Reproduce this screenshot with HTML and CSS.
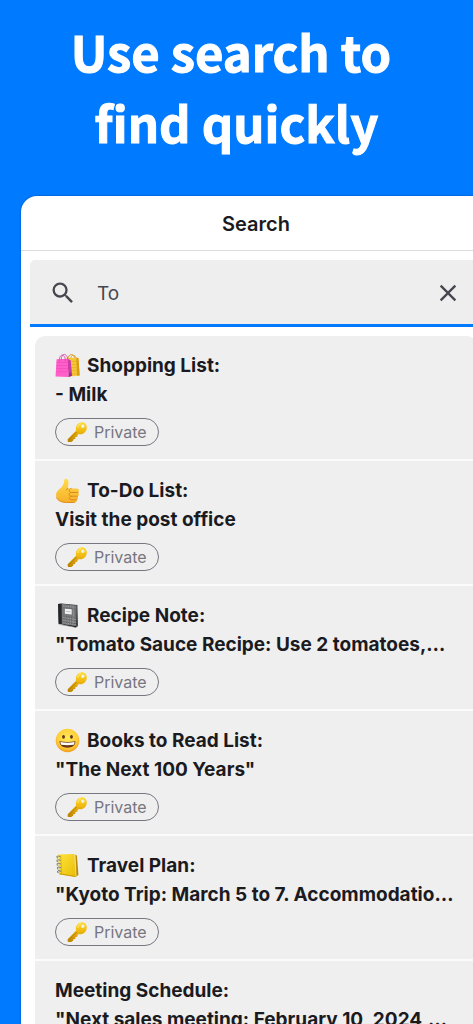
FILE: index.html
```html
<!DOCTYPE html>
<html lang="en">
<head>
<meta charset="utf-8">
<meta name="viewport" content="width=device-width, initial-scale=1">
<title>Search</title>
<link rel="stylesheet" href="styles.css">
</head>
<body>
<svg class="defs" aria-hidden="true">
  <defs>
    <linearGradient id="gold" x1="0" y1="0" x2="0" y2="1"><stop offset="0" stop-color="#ffdc2e"/><stop offset=".5" stop-color="#edb40c"/><stop offset="1" stop-color="#b98205"/></linearGradient>
    <linearGradient id="skin" x1="0" y1="0" x2="0" y2="1"><stop offset="0" stop-color="#ffdc4c"/><stop offset="1" stop-color="#f7b02a"/></linearGradient>
    <radialGradient id="face" cx=".5" cy=".4" r=".6"><stop offset="0" stop-color="#ffe85c"/><stop offset=".7" stop-color="#ffcf3a"/><stop offset="1" stop-color="#f09a1c"/></radialGradient>
    <linearGradient id="page" x1="0" y1="0" x2="1" y2="1"><stop offset="0" stop-color="#ffe43b"/><stop offset="1" stop-color="#e9bd08"/></linearGradient>
  </defs>
  <symbol id="key" viewBox="0 0 24 24">
    <path fill="url(#gold)" fill-rule="evenodd" d="M16 1.500c4-.8 7 2 6.700 6-.3 4.500-4.400 7.700-8.700 6.700l-1.300 1.200-.4 1.900-2 .2-.3 2-2 .3-.3 1.800-2.200 1.200-3.500.2-.2-3.200L11 10.400C10 6 12.400 2.300 16 1.500Zm1.800 2.300a1.900 1.900 0 1 0 1.600 3.400 1.900 1.900 0 0 0-1.600-3.400Z"/>
    <path fill="none" stroke="#a87304" stroke-width=".9" d="m2.600 21 9-9"/>
    <path fill="none" stroke="#fff08a" stroke-width="1" d="M13 7.500c.2-2.500 1.500-4 3.300-4.500"/>
  </symbol>
</svg>
<main class="page">
  <h1 class="headline">Use search to&nbsp;<br>find quickly</h1>
  <section class="panel" aria-labelledby="panel-title">
    <h2 class="panel-title" id="panel-title">Search</h2>
    <form class="search">
      <svg class="icon" viewBox="0 0 24 24" aria-hidden="true"><path fill="currentColor" d="M15.500 14h-.79l-.28-.27A6.470 6.470 0 0 0 16 9.500 6.500 6.500 0 1 0 9.500 16c1.610 0 3.090-.59 4.230-1.570l.27.28v.79l5 4.990L20.490 19l-4.990-5zm-6 0C7.010 14 5 11.990 5 9.500S7.010 5 9.500 5 14 7.010 14 9.500 11.990 14 9.500 14z"/></svg>
      <input class="search-input" type="text" value="To" aria-label="Search notes">
      <button class="clear" type="button" aria-label="Clear"><svg class="icon" viewBox="0 0 24 24" aria-hidden="true"><path fill="currentColor" d="M19 6.410 17.590 5 12 10.590 6.410 5 5 6.410 10.590 12 5 17.590 6.410 19 12 13.410 17.590 19 19 17.590 13.410 12z"/></svg></button>
    </form>
    <ul class="results">
      <li class="note">
        <h3 class="title"><svg class="emoji" viewBox="0 0 24 24" aria-hidden="true"><path fill="none" stroke="#d59a1c" stroke-width=".9" d="M12.500 6C12.500 0 19 0 19 6m-4 0c0-5 5-5 5.500 0"/><path fill="#f6c63a" d="m11 4.500 11.500.2 1.200 17L14 22.500Z"/><path fill="#d99b12" d="m20.500 4.600 2 .1 1.200 17-2.500.2Z"/><path stroke="#e5a91a" stroke-width=".6" d="M13 8h8m-8 3h8m-7 3h8m-8 3h8m-8 3h8"/><path fill="#ff5fc8" d="M1.500 6 12 5.500 13 23 .5 22.500Z"/><path fill="#c93ba8" d="m12 5.500 3 1.500 1.500 14.500-3.500 1.500Z"/><path fill="#9d2789" d="m14 18 2.500 3.500L13 23Z"/><path stroke="#f047b8" stroke-width=".6" d="M1.500 9h11m-11 3h11m-11 3h11m-11 3h11"/><path fill="none" stroke="#d64bab" stroke-width=".9" d="M4 8c0-8 6-8 6 0m-4-1c0-8 6-7 6.500 0"/></svg> Shopping List:</h3>
        <p class="text">- Milk</p>
        <span class="tag"><svg class="key" aria-hidden="true"><use href="#key"/></svg>Private</span>
      </li>
      <li class="note">
        <h3 class="title"><svg class="emoji" viewBox="0 0 24 24" aria-hidden="true"><path fill="url(#skin)" d="M9.500 1c2-.8 3.500.7 3.500 3 0 2.300-.6 4.200-.6 6h8.400c2.500 0 2.900 3.300 1 3.900 1.700.7 1.500 3.300-.3 3.700 1.200.9.800 3-.8 3.300.6 1.400-.3 2.600-2 2.600H11C5 23.500 1 21 1 16.300c0-4 3-5 5-7.300 2-2.200 2.600-3.200 2.800-6.500Z"/><path fill="none" stroke="#d98718" stroke-width=".9" stroke-linecap="round" d="M12.400 10c-.8.3-1.400.8-1.600 1.600M22 13.900h-6.500c-2.700 0-2.500 3.600 0 3.600h6m-6 0c-2.200.4-2.200 3.400 0 3.400h5.300M15.500 10c-2.800.3-2.500 3.900 0 3.900M1.500 19c1.500 3 5 4.500 9.500 4.500h7.500"/></svg> To-Do List:</h3>
        <p class="text">Visit the post office</p>
        <span class="tag"><svg class="key" aria-hidden="true"><use href="#key"/></svg>Private</span>
      </li>
      <li class="note">
        <h3 class="title"><svg class="emoji" viewBox="0 0 24 24" aria-hidden="true"><path fill="#303235" d="m3 1 3-.5L21.500 2l.5 20-2 1.500L3.500 20Z"/><path fill="#77797b" d="m6.500.8 14.300 1.500-.5 20.500L6.700 20Z"/><path stroke="#a9abac" stroke-width=".9" stroke-dasharray="1 1.200" d="m8 3 12 1.200M8 14l12 2M8 16.500l12 2M8 19l12 2M18 5v14"/><path stroke="#505254" stroke-width=".7" stroke-dasharray="1 1.500" d="m8 4.500 11 1M8 12.500l12 2M8 15l12 2M8 18l12 2M19.500 4v17"/><path fill="#f1f1f1" d="m9.500 5.500 6.500.6v5l-6.500-.7Z"/><path stroke="#a0a2a4" stroke-width=".6" d="m10.700 8 4 .4"/><path fill="#242629" d="m3 1 2.500-.4L5.700 20.500 3.500 20Z"/><path stroke="#b8b9ba" stroke-width=".8" d="m3.500 20.500 16.500 3 1.700-1.300"/></svg> Recipe Note:</h3>
        <p class="text">"Tomato Sauce Recipe: Use 2 tomatoes,…</p>
        <span class="tag"><svg class="key" aria-hidden="true"><use href="#key"/></svg>Private</span>
      </li>
      <li class="note">
        <h3 class="title"><svg class="emoji" viewBox="0 0 24 24" aria-hidden="true"><circle cx="12" cy="12" r="11.300" fill="url(#face)"/><ellipse cx="8.200" cy="8.500" rx="1.400" ry="1.900" fill="#633812"/><ellipse cx="15.800" cy="8.500" rx="1.400" ry="1.900" fill="#633812"/><path fill="#6b3517" d="M4.300 12.800c5.100.9 10.300.9 15.400 0 0 3.800-3 6.200-7.700 6.200s-7.700-2.400-7.700-6.200Z"/><path fill="#fff" d="M5.200 13.500c4.500.8 9.100.8 13.600 0 0 1.200-.3 2-.8 2.600-4 .6-8 .6-12 0-.5-.6-.8-1.400-.8-2.600Z"/></svg> Books to Read List:</h3>
        <p class="text">"The Next 100 Years"</p>
        <span class="tag"><svg class="key" aria-hidden="true"><use href="#key"/></svg>Private</span>
      </li>
      <li class="note">
        <h3 class="title"><svg class="emoji" viewBox="0 0 24 24" aria-hidden="true"><path fill="#b98a08" d="m19 1.500 2 1 1.500 18.500-3 2Z"/><path fill="#f3dc7a" d="m18.500 1.500 1.300.7.800 19.800-1.100.5Z"/><path fill="url(#page)" d="m3 1.500 15.500-.5 1.200 22L4 20.500Z"/><path fill="#c99b09" d="m4 20.500 15.700 2.500-.1-1L4 19.500Z"/><path stroke="#d6aa0b" stroke-width=".7" d="m5.500 2 1 18.500"/><path fill="none" stroke="#85857e" stroke-width="1" stroke-linecap="round" d="M5 3.500C2 2 1 4 2.500 4.800M5 7C2 5.500 1 7.500 2.500 8.300M5.200 10.500c-3-1.500-4 .5-2.500 1.300M5.400 14c-3-1.500-4 .5-2.500 1.300M5.600 17.500c-3-1.500-4 .5-2.500 1.300"/></svg> Travel Plan:</h3>
        <p class="text">"Kyoto Trip: March 5 to 7. Accommodatio…</p>
        <span class="tag"><svg class="key" aria-hidden="true"><use href="#key"/></svg>Private</span>
      </li>
      <li class="note">
        <h3 class="title">Meeting Schedule:</h3>
        <p class="text">"Next sales meeting: February 10, 2024,…</p>
        <span class="tag"><svg class="key" aria-hidden="true"><use href="#key"/></svg>Private</span>
      </li>
    </ul>
  </section>
</main>
</body>
</html>
```
FILE: styles.css
```css
* { box-sizing: border-box; }
body {
  margin: 0;
  background: #007aff;
  color: #1b1b1f;
  font-family: Inter, "Liberation Sans", sans-serif;
}
.defs { position: absolute; width: 0; height: 0; }
.page { height: 100vh; overflow: hidden; }
.headline {
  margin: 0;
  padding: 15px 0 39px;
  color: #fff;
  font: 700 49px/71px "Noto Sans CJK JP", "Noto Sans", sans-serif;
  -webkit-text-stroke: 1px #fff;
  text-align: center;
}
.panel {
  margin: 0 -18px 0 21px;
  background: #fff;
  border-radius: 16px 16px 0 0;
  box-shadow: 0 0 2px rgba(0, 30, 90, .5);
}
.panel-title {
  margin: 0;
  height: 55px;
  border-bottom: 1px solid #dcdcde;
  font-size: 20px;
  font-weight: 600;
  line-height: 56px;
  text-align: center;
}
.search {
  display: flex;
  align-items: center;
  height: 67px;
  margin: 9px;
  padding: 2px 20px 0 19px;
  background: #eee;
  border-bottom: 3px solid #007aff;
  border-radius: 5px 5px 0 0;
  color: #46464f;
}
.icon { display: block; flex: none; width: 28px; height: 28px; }
.search-input {
  flex: 1;
  min-width: 0;
  margin-left: 20px;
  padding: 2px 0 0;
  border: 0;
  outline: 0;
  background: none;
  color: inherit;
  font: 400 19px/28px Inter, sans-serif;
}
.clear { padding: 0; border: 0; background: none; color: inherit; }
.results {
  margin: 0 14px;
  padding: 0;
  list-style: none;
  background: #efefef;
  border-radius: 10px 10px 0 0;
}
.note { height: 125px; padding: 15px 20px 0; border-bottom: 2px solid #fbfbfb; }
.title, .text {
  margin: 0;
  font-size: 19px;
  font-weight: 700;
  line-height: 29px;
  white-space: nowrap;
}
.title { display: flex; align-items: center; gap: 7px; }
.emoji { flex: none; width: 25px; height: 25px; }
.tag {
  display: inline-flex;
  align-items: center;
  gap: 6px;
  height: 28px;
  margin-top: 9px;
  padding: 0 11px 0 10px;
  border: 1px solid #777680;
  border-radius: 14px;
  color: #777680;
  font-size: 16px;
}
.key { width: 22px; height: 22px; }
```
